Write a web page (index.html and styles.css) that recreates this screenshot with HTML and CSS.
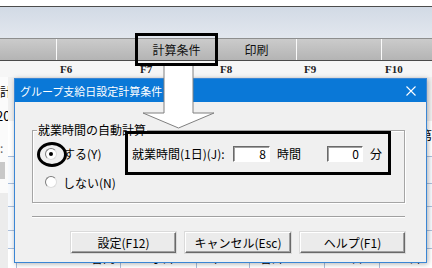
FILE: index.html
```html
<!DOCTYPE html>
<html lang="ja">
<head>
    <meta charset="UTF-8">
    <meta name="viewport" content="width=device-width, initial-scale=1.0">
    <title>グループ支給日設定計算条件</title>
    <link rel="stylesheet" href="styles.css">
</head>
<body>

<div class="top-white"></div>
<div class="band"></div>

<div class="toolbar">
    <div class="tb-btn first"></div>
    <div class="tb-btn"></div>
    <div class="tb-btn">計算条件</div>
    <div class="tb-btn">印刷</div>
    <div class="tb-btn wide"></div>
    <div class="tb-btn rest"></div>
</div>

<div class="fkeys">
    <span class="fk first"></span>
    <span class="fk">F6</span>
    <span class="fk">F7</span>
    <span class="fk">F8</span>
    <span class="fk wide f9">F9</span>
    <span class="fk rest">F10</span>
</div>

<div class="main">
    <div class="side">
        <div class="side-txt">計</div>
        <div class="side-txt year">201</div>
        <div class="side-dot">:</div>
        <div class="side-cell"></div>
        <div class="side-low"></div>
    </div>
    <div class="sheet">
        <div class="sh-head"></div>
        <div class="sh-title">第</div>
        <div class="sh-row r1"></div>
        <div class="sh-row r2"></div>
        <div class="sh-row r3"></div>
        <div class="sh-row r4"></div>
        <div class="sh-last">
            <span class="cell c1"></span>
            <span class="cell c2">合同</span>
            <span class="cell c3">小計</span>
            <span class="cell c4">年</span>
            <span class="cell c5">合計</span>
            <span class="cell c6">日</span>
            <span class="cell c7">計</span>
        </div>
    </div>
</div>

<!-- dialog window -->
<div class="dialog">
    <div class="titlebar">
        <span>グループ支給日設定計算条件</span>
        <svg class="close" width="10" height="10" viewBox="0 0 10 10">
            <path d="M0.5 0.5 L9.5 9.5 M9.5 0.5 L0.5 9.5" stroke="#fff" stroke-width="1.1" fill="none"/>
        </svg>
    </div>
    <div class="dlg-body">
        <div class="group">
            <div class="legend">就業時間の自動計算</div>
            <div class="row row1">
                <div class="opt">
                    <span class="radio checked"></span>
                    <span class="opt-label">する(Y)</span>
                </div>
                <span class="field-label">就業時間(1日)(J):</span>
                <span class="num n1">8</span>
                <span class="unit">時間</span>
                <span class="num n2">0</span>
                <span class="unit last">分</span>
            </div>
            <div class="row row2">
                <span class="radio"></span>
                <span class="opt-label">しない(N)</span>
            </div>
        </div>
        <div class="sep"></div>
        <div class="btns">
            <div class="btn">設定(F12)</div>
            <div class="btn mid">キャンセル(Esc)</div>
            <div class="btn">ヘルプ(F1)</div>
        </div>
    </div>
</div>

<!-- annotations drawn over the screenshot -->
<div class="mark-box"></div>
<svg class="arrow" width="432" height="268" viewBox="0 0 432 268">
    <polygon points="164,65 193,65 193,113 214,113 178.5,128 143,113 164,113" fill="#fff" stroke="#808080" stroke-width="1"/>
</svg>
<div class="mark-ring"></div>
<div class="mark-field"></div>

</body>
</html>
```

FILE: styles.css
```css
body {
    margin: 0;
    width: 432px;
    height: 268px;
    overflow: hidden;
    position: relative;
    background: #fff;
    color: #000;
    font-family: "Noto Sans CJK JP", "Noto Sans", sans-serif;
    font-size: 12px;
}

/* window chrome behind the dialog */
.top-white {
    height: 6px;
    background: #fff;
    border-bottom: 1px solid #4d4d4d;
}
.band {
    height: 31px;
    background: linear-gradient(#d2dae5, #e2e7ee);
}
.toolbar {
    display: flex;
    height: 21px;
    border-top: 1px solid #8e8e8e;
    border-bottom: 1px solid #4a4a4a;
}
.tb-btn {
    box-sizing: border-box;
    width: 80px;
    border-left: 1px solid #fafafa;
    background: linear-gradient(#cbcbcb, #b4b4b4);
    text-align: center;
    line-height: 21px;
    color: #111;
}
.tb-btn.first, .fk.first {
    width: 56px;
    border-left: none;
}
.tb-btn.wide, .fk.wide {
    width: 85px;
}
.tb-btn.rest, .fk.rest {
    flex: 1;
}
.fkeys {
    display: flex;
    height: 16px;
    background: #f6f6f6;
}
.fk {
    box-sizing: border-box;
    width: 80px;
    padding-left: 4px;
    font: bold 11px/16px "Liberation Serif", serif;
    color: #222;
}
.fk.f9 {
    padding-left: 8px;
}

.main {
    display: flex;
    height: 191px;
}
.side {
    width: 14px;
    overflow: hidden;
    background: #fbfbfb;
}
.side-txt {
    font-size: 12px;
    line-height: 17px;
    white-space: nowrap;
}
.side-txt:first-child {
    margin-top: 6px;
}
.side-txt.year {
    margin: 7px 0 0 -4px;
    font-size: 13px;
}
.side-dot {
    margin-top: 18px;
    line-height: 12px;
    color: #666;
}
.side-cell {
    margin-top: 8px;
    width: 5px;
    height: 17px;
    background: #c8c8c8;
}
.side-low {
    margin-top: 14px;
    height: 80px;
    background: #ececec;
}
.sheet {
    flex: 1;
    display: flex;
    flex-direction: column;
}
.sh-head {
    height: 48px;
    background: #f0f0f0;
}
.sh-title {
    height: 37px;
    border-bottom: 1px solid #a9bedb;
    padding-left: 411px;
    font-size: 13px;
    line-height: 28px;
    white-space: nowrap;
    overflow: hidden;
}
.sh-row {
    border-bottom: 1px solid #a9bedb;
    background: #f6f9fd;
}
.sh-row.r1 { height: 29px; }
.sh-row.r2 { height: 23px; }
.sh-row.r3 { height: 25px; }
.sh-row.r4 { height: 19px; }
.sh-last {
    display: flex;
    height: 20px;
    line-height: 18px;
    font-size: 12px;
}
.cell {
    box-sizing: border-box;
    border-right: 1px solid #a9bedb;
    padding-left: 30px;
    white-space: nowrap;
    overflow: hidden;
}
.cell.c1 { width: 9px; padding: 0; }
.cell.c2 { width: 104px; padding-left: 74px; }
.cell.c3 { width: 76px; padding-left: 30px; }
.cell.c4 { width: 53px; padding-left: 12px; }
.cell.c5 { width: 75px; padding-left: 10px; }
.cell.c6 { width: 55px; padding-left: 26px; }
.cell.c7 { flex: 1; padding-left: 30px; border-right: none; }

/* dialog */
.dialog {
    position: absolute;
    left: 14px;
    top: 78px;
    width: 411px;
    height: 183px;
    border: 1px solid #3b86d4;
    background: #f0f0f0;
    box-shadow: 1px 1px 5px rgba(0, 0, 0, 0.3);
}
.titlebar {
    height: 23px;
    background: #0a78d7;
    color: #fff;
    display: flex;
    align-items: center;
    justify-content: space-between;
    padding: 0 10px 0 5px;
    font-size: 11px;
}
.dlg-body {
    padding: 28px 0 0 17px;
}
.group {
    width: 371px;
    border: 1px solid #a5a5a5;
    box-shadow: inset 1px 1px 0 #fff, 1px 1px 0 #fff;
    padding-bottom: 9px;
}
.legend {
    width: fit-content;
    margin: -9px 0 0 4px;
    padding: 0 1px;
    background: #f0f0f0;
    line-height: 16px;
}
.row {
    display: flex;
    align-items: center;
    padding-left: 12px;
    white-space: nowrap;
}
.row1 {
    height: 31px;
}
.row2 {
    height: 22px;
    margin-top: 2px;
}
.opt {
    width: 87px;
    display: flex;
    align-items: center;
}
.radio {
    box-sizing: border-box;
    width: 12px;
    height: 12px;
    border-radius: 50%;
    border: 1px solid;
    border-color: #7c7c7c #dcdcdc #dcdcdc #7c7c7c;
    background: #fff;
    display: flex;
    align-items: center;
    justify-content: center;
}
.radio.checked::after {
    content: "";
    width: 4px;
    height: 4px;
    border-radius: 50%;
    background: #000;
}
.opt-label {
    margin-left: 6px;
}
.field-label {
    width: 101px;
}
.num {
    box-sizing: border-box;
    height: 16px;
    background: #fff;
    border-top: 1px solid #6a6a6a;
    border-left: 1px solid #6a6a6a;
    border-right: 1px solid #fff;
    border-bottom: 1px solid #fff;
    box-shadow: inset 1px 1px 0 #a0a0a0;
    text-align: right;
    padding-right: 3px;
    line-height: 14px;
}
.num.n1 { width: 37px; }
.num.n2 { width: 36px; }
.unit {
    width: 50px;
    margin-left: 7px;
}
.unit.last {
    width: auto;
}
.sep {
    width: 373px;
    margin-top: 13px;
    border-top: 1px solid #a0a0a0;
    border-bottom: 1px solid #fff;
}
.btns {
    display: flex;
    justify-content: flex-end;
    gap: 9px;
    width: 373px;
    margin-top: 14px;
}
.btn {
    box-sizing: border-box;
    width: 105px;
    height: 21px;
    background: #ebebeb;
    border-top: 1px solid #fff;
    border-left: 1px solid #fff;
    border-right: 1px solid #696969;
    border-bottom: 1px solid #696969;
    box-shadow: inset -1px -1px 0 #a0a0a0, 0 0 0 1px #dadada;
    text-align: center;
    line-height: 19px;
}
.btn.mid {
    width: 106px;
}

/* annotations */
.mark-box {
    position: absolute;
    left: 135px;
    top: 33px;
    width: 83px;
    height: 33px;
    box-sizing: border-box;
    border: 3px solid #000;
    z-index: 3;
}
.arrow {
    position: absolute;
    left: 0;
    top: 0;
    z-index: 2;
}
.mark-ring {
    position: absolute;
    left: 37px;
    top: 142px;
    width: 30px;
    height: 25px;
    box-sizing: border-box;
    border: 3px solid #000;
    border-radius: 50%;
    z-index: 3;
}
.mark-field {
    position: absolute;
    left: 125px;
    top: 131px;
    width: 266px;
    height: 44px;
    box-sizing: border-box;
    border: 3px solid #000;
    z-index: 3;
}
```
